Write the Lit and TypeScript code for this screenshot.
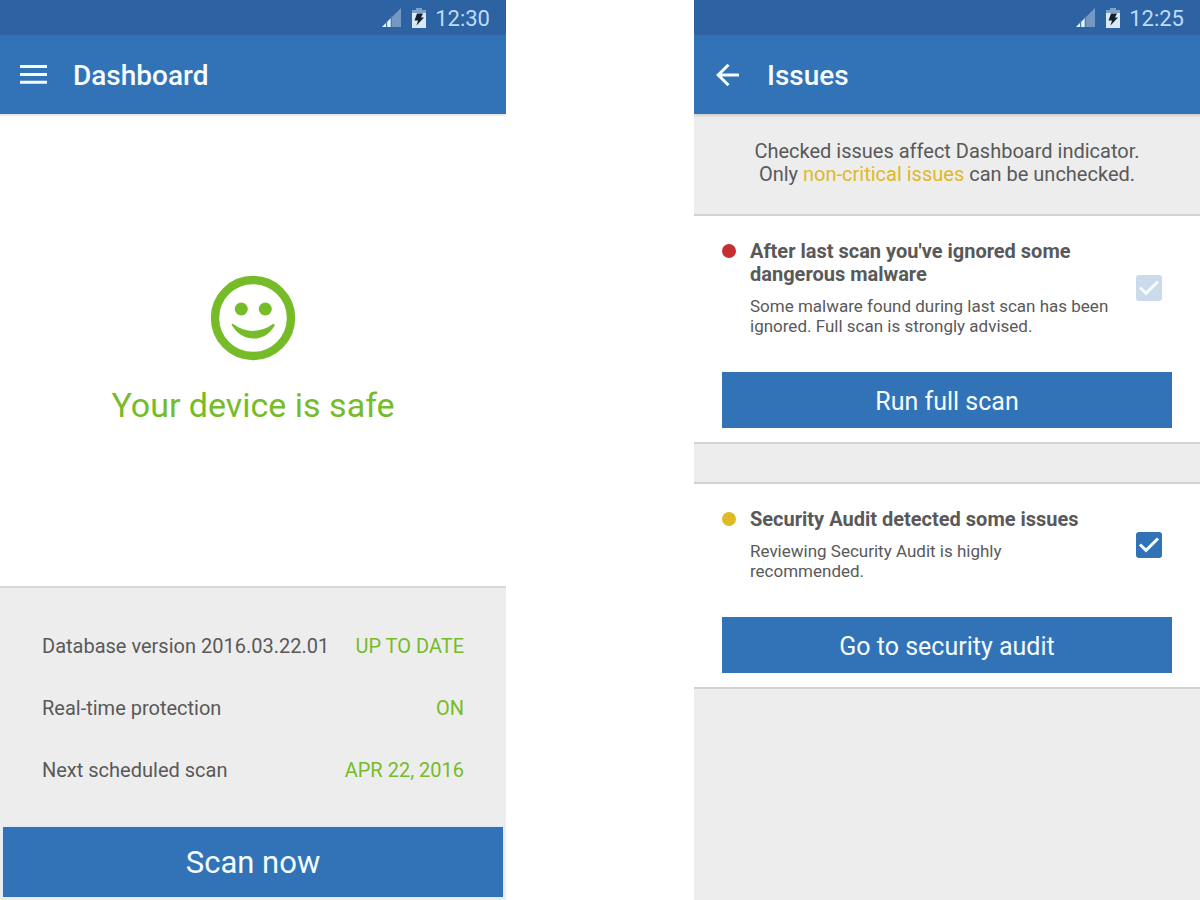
import { LitElement, html, css, svg } from "lit";
import { customElement, property, state } from "lit/decorators.js";

@customElement("status-bar")
class StatusBar extends LitElement {
  @property() time = "";

  static styles = css`
    :host {
      display: flex;
      align-items: center;
      justify-content: flex-end;
      height: 35px;
      padding: 0 16px;
      box-sizing: border-box;
      background: #2d62a3;
      color: #bddcf8;
      font-size: 22px;
    }
    .time {
      padding-top: 3px;
      line-height: 26px;
    }
    .signal {
      width: 19px;
      height: 19px;
      margin-right: 11px;
    }
    .battery {
      width: 14px;
      height: 20px;
      margin-right: 9px;
    }
  `;

  render() {
    return html`
      <svg class="signal" viewBox="0 0 19 19" aria-hidden="true">
        <path d="M19 0V19H0Z" fill="#7498c4" />
        <path d="M9 10V19H0Z" fill="#e2f4fe" />
        <path d="M4.6 13V19M9.3 8V19" stroke="#4577b4" stroke-width="1.2" />
      </svg>
      <svg class="battery" viewBox="0 0 14 20" aria-hidden="true">
        <path d="M4 0h6v2h4v4H0V2h4z" fill="#7fa2cb" />
        <path d="M0 5h14v15H0z" fill="#d9e9f6" />
        <path d="M5 5.5h6L9 9.5h3L4.500 17.500 6 12.500H2.500z" fill="#14202e" />
      </svg>
      <span class="time">${this.time}</span>
    `;
  }
}

@customElement("title-bar")
class TitleBar extends LitElement {
  @property() heading = "";
  @property() icon = "menu";

  static styles = css`
    :host {
      display: flex;
      align-items: center;
      gap: 20px;
      height: 79px;
      padding: 0 14px;
      box-sizing: border-box;
      background: #3273b7;
      color: #f4fcff;
    }
    .nav {
      display: flex;
      padding: 0;
      border: 0;
      background: none;
      color: inherit;
      cursor: pointer;
    }
    .nav svg {
      width: 39px;
      height: 40px;
    }
    h1 {
      margin: 0;
      padding-top: 3px;
      font-size: 28px;
      line-height: 36px;
      font-weight: 500;
    }
  `;

  render() {
    const back = this.icon === "back";
    return html`
      <button class="nav" aria-label=${back ? "Back" : "Menu"}>
        <svg viewBox="0 0 39 40" fill="none" stroke="currentColor" stroke-width="3">
          ${back
            ? svg`<path d="M31 20H11M20.500 9.700L10.200 20L20.500 30.300" />`
            : svg`<path d="M6 11.500h27M6 19.500h27M6 27.200h27" />`}
        </svg>
      </button>
      <h1>${this.heading}</h1>
    `;
  }
}

@customElement("issue-card")
class IssueCard extends LitElement {
  @property() heading = "";
  @property() description = "";
  @property() action = "";
  @property() level = "warning";
  @property({ type: Boolean }) locked = false;
  @state() private checked = true;

  static styles = css`
    :host {
      display: block;
      padding: 24px 28px 14px;
      background: #fff;
      box-shadow: 0 -2px 0 #d2d2d2, 0 2px 0 #d2d2d2;
    }
    .row {
      display: flex;
      align-items: center;
      gap: 20px;
      padding-right: 10px;
      margin-bottom: 36px;
    }
    .issue {
      flex: 1;
      display: grid;
      grid-template-columns: 14px 1fr;
      gap: 10px 14px;
    }
    .dot {
      width: 14px;
      height: 14px;
      margin-top: 4px;
      border-radius: 50%;
      background: #dfb926;
    }
    .dot.critical {
      background: #c62f31;
    }
    .title {
      font-size: 20px;
      line-height: 23px;
      font-weight: 700;
    }
    .text {
      grid-column: 2;
      margin: 0;
      font-size: 17px;
      line-height: 20px;
    }
    .check {
      appearance: none;
      flex: none;
      width: 26px;
      height: 26px;
      margin: 0;
      border-radius: 3px;
      border: 3px solid #3273b7;
    }
    .check:checked {
      border: 0;
      background: #3273b7
        url("data:image/svg+xml,%3Csvg xmlns='http://www.w3.org/2000/svg' viewBox='0 0 26 26'%3E%3Cpath d='M4 12.500L10 18.300L22 6.500' fill='none' stroke='%23f4fcff' stroke-width='3'/%3E%3C/svg%3E");
    }
    .check:disabled {
      background-color: #cbdbeb;
    }
    .action {
      display: block;
      width: 100%;
      padding: 12px 10px 8px;
      border: 0;
      background: #3273b7;
      color: #f4fcff;
      font: inherit;
      font-size: 25px;
      line-height: 36px;
      cursor: pointer;
    }
  `;

  render() {
    return html`
      <div class="row">
        <div class="issue">
          <span class="dot ${this.level}"></span>
          <label class="title" for="check">${this.heading}</label>
          <p class="text">${this.description}</p>
        </div>
        <input
          id="check"
          class="check"
          type="checkbox"
          .checked=${this.checked}
          ?disabled=${this.locked}
          @change=${(e: Event) => (this.checked = (e.target as HTMLInputElement).checked)}
        />
      </div>
      <button class="action">${this.action}</button>
    `;
  }
}

@customElement("app-root")
class AppRoot extends LitElement {
  static styles = css`
    :host {
      display: grid;
      grid-template-columns: 1fr 1fr;
      gap: 188px;
      min-height: 100vh;
      background: #fff;
      color: #595959;
      font-family: Roboto, "Liberation Sans", sans-serif;
    }
    .screen {
      display: flex;
      flex-direction: column;
    }
    .hero {
      flex: 1;
      display: flex;
      flex-direction: column;
      align-items: center;
      justify-content: center;
      gap: 22px;
      padding-top: 2px;
      color: #76bb28;
      background: linear-gradient(#dedede, #fff 3px);
    }
    .face {
      width: 86px;
      height: 86px;
    }
    .verdict {
      margin: 0;
      font-size: 34px;
      line-height: 44px;
    }
    .summary {
      padding: 27px 3px 3px;
      border-top: 2px solid #d6d6d6;
      background: #ededed;
    }
    .facts {
      margin: 0 39px 26px;
    }
    .fact {
      display: flex;
      justify-content: space-between;
      font-size: 20px;
      line-height: 62px;
    }
    .fact dd {
      margin: 0;
      color: #76bb28;
    }
    .scan {
      display: block;
      width: 100%;
      padding: 15px 14px 13px;
      border: 0;
      outline: 1px solid #dcecfa;
      background: #3273b7;
      color: #f4fcff;
      font: inherit;
      font-size: 31px;
      line-height: 42px;
      cursor: pointer;
    }
    .issues {
      flex: 1;
      display: flex;
      flex-direction: column;
      gap: 42px;
      background: linear-gradient(#cfcfcf, #ededed 4px);
    }
    .note {
      margin: 26px 20px -12px;
      font-size: 20px;
      line-height: 23px;
      text-align: center;
    }
    .soft {
      color: #dfb926;
    }
  `;

  private facts = [
    ["Database version 2016.03.22.01", "UP TO DATE"],
    ["Real-time protection", "ON"],
    ["Next scheduled scan", "APR 22, 2016"],
  ];

  render() {
    return html`
      <section class="screen">
        <status-bar time="12:30"></status-bar>
        <title-bar heading="Dashboard" icon="menu"></title-bar>
        <div class="hero">
          <svg class="face" viewBox="0 0 86 86" fill="currentColor" aria-hidden="true">
            <circle cx="43" cy="43" r="38" fill="none" stroke="currentColor" stroke-width="8.400" />
            <circle cx="31.300" cy="34" r="6.500" />
            <circle cx="55.300" cy="34" r="6.500" />
            <path d="M22 50.500C20.800 48.800 22.500 48.300 24 49.500C35 58 51 58 62 49.500C64 48.300 65.300 49.500 64.300 51.200C54.500 67.800 32.500 67.800 22 50.500Z" />
          </svg>
          <p class="verdict">Your device is safe</p>
        </div>
        <div class="summary">
          <dl class="facts">
            ${this.facts.map(
              ([name, value]) => html`<div class="fact"><dt>${name}</dt><dd>${value}</dd></div>`
            )}
          </dl>
          <button class="scan">Scan now</button>
        </div>
      </section>
      <section class="screen">
        <status-bar time="12:25"></status-bar>
        <title-bar heading="Issues" icon="back"></title-bar>
        <div class="issues">
          <p class="note">
            Checked issues affect Dashboard indicator.<br />
            Only <span class="soft">non-critical issues</span> can be unchecked.
          </p>
          <issue-card
            level="critical"
            locked
            heading="After last scan you've ignored some dangerous malware"
            description="Some malware found during last scan has been ignored. Full scan is strongly advised."
            action="Run full scan"
          ></issue-card>
          <issue-card
            heading="Security Audit detected some issues"
            description="Reviewing Security Audit is highly recommended."
            action="Go to security audit"
          ></issue-card>
        </div>
      </section>
    `;
  }
}
